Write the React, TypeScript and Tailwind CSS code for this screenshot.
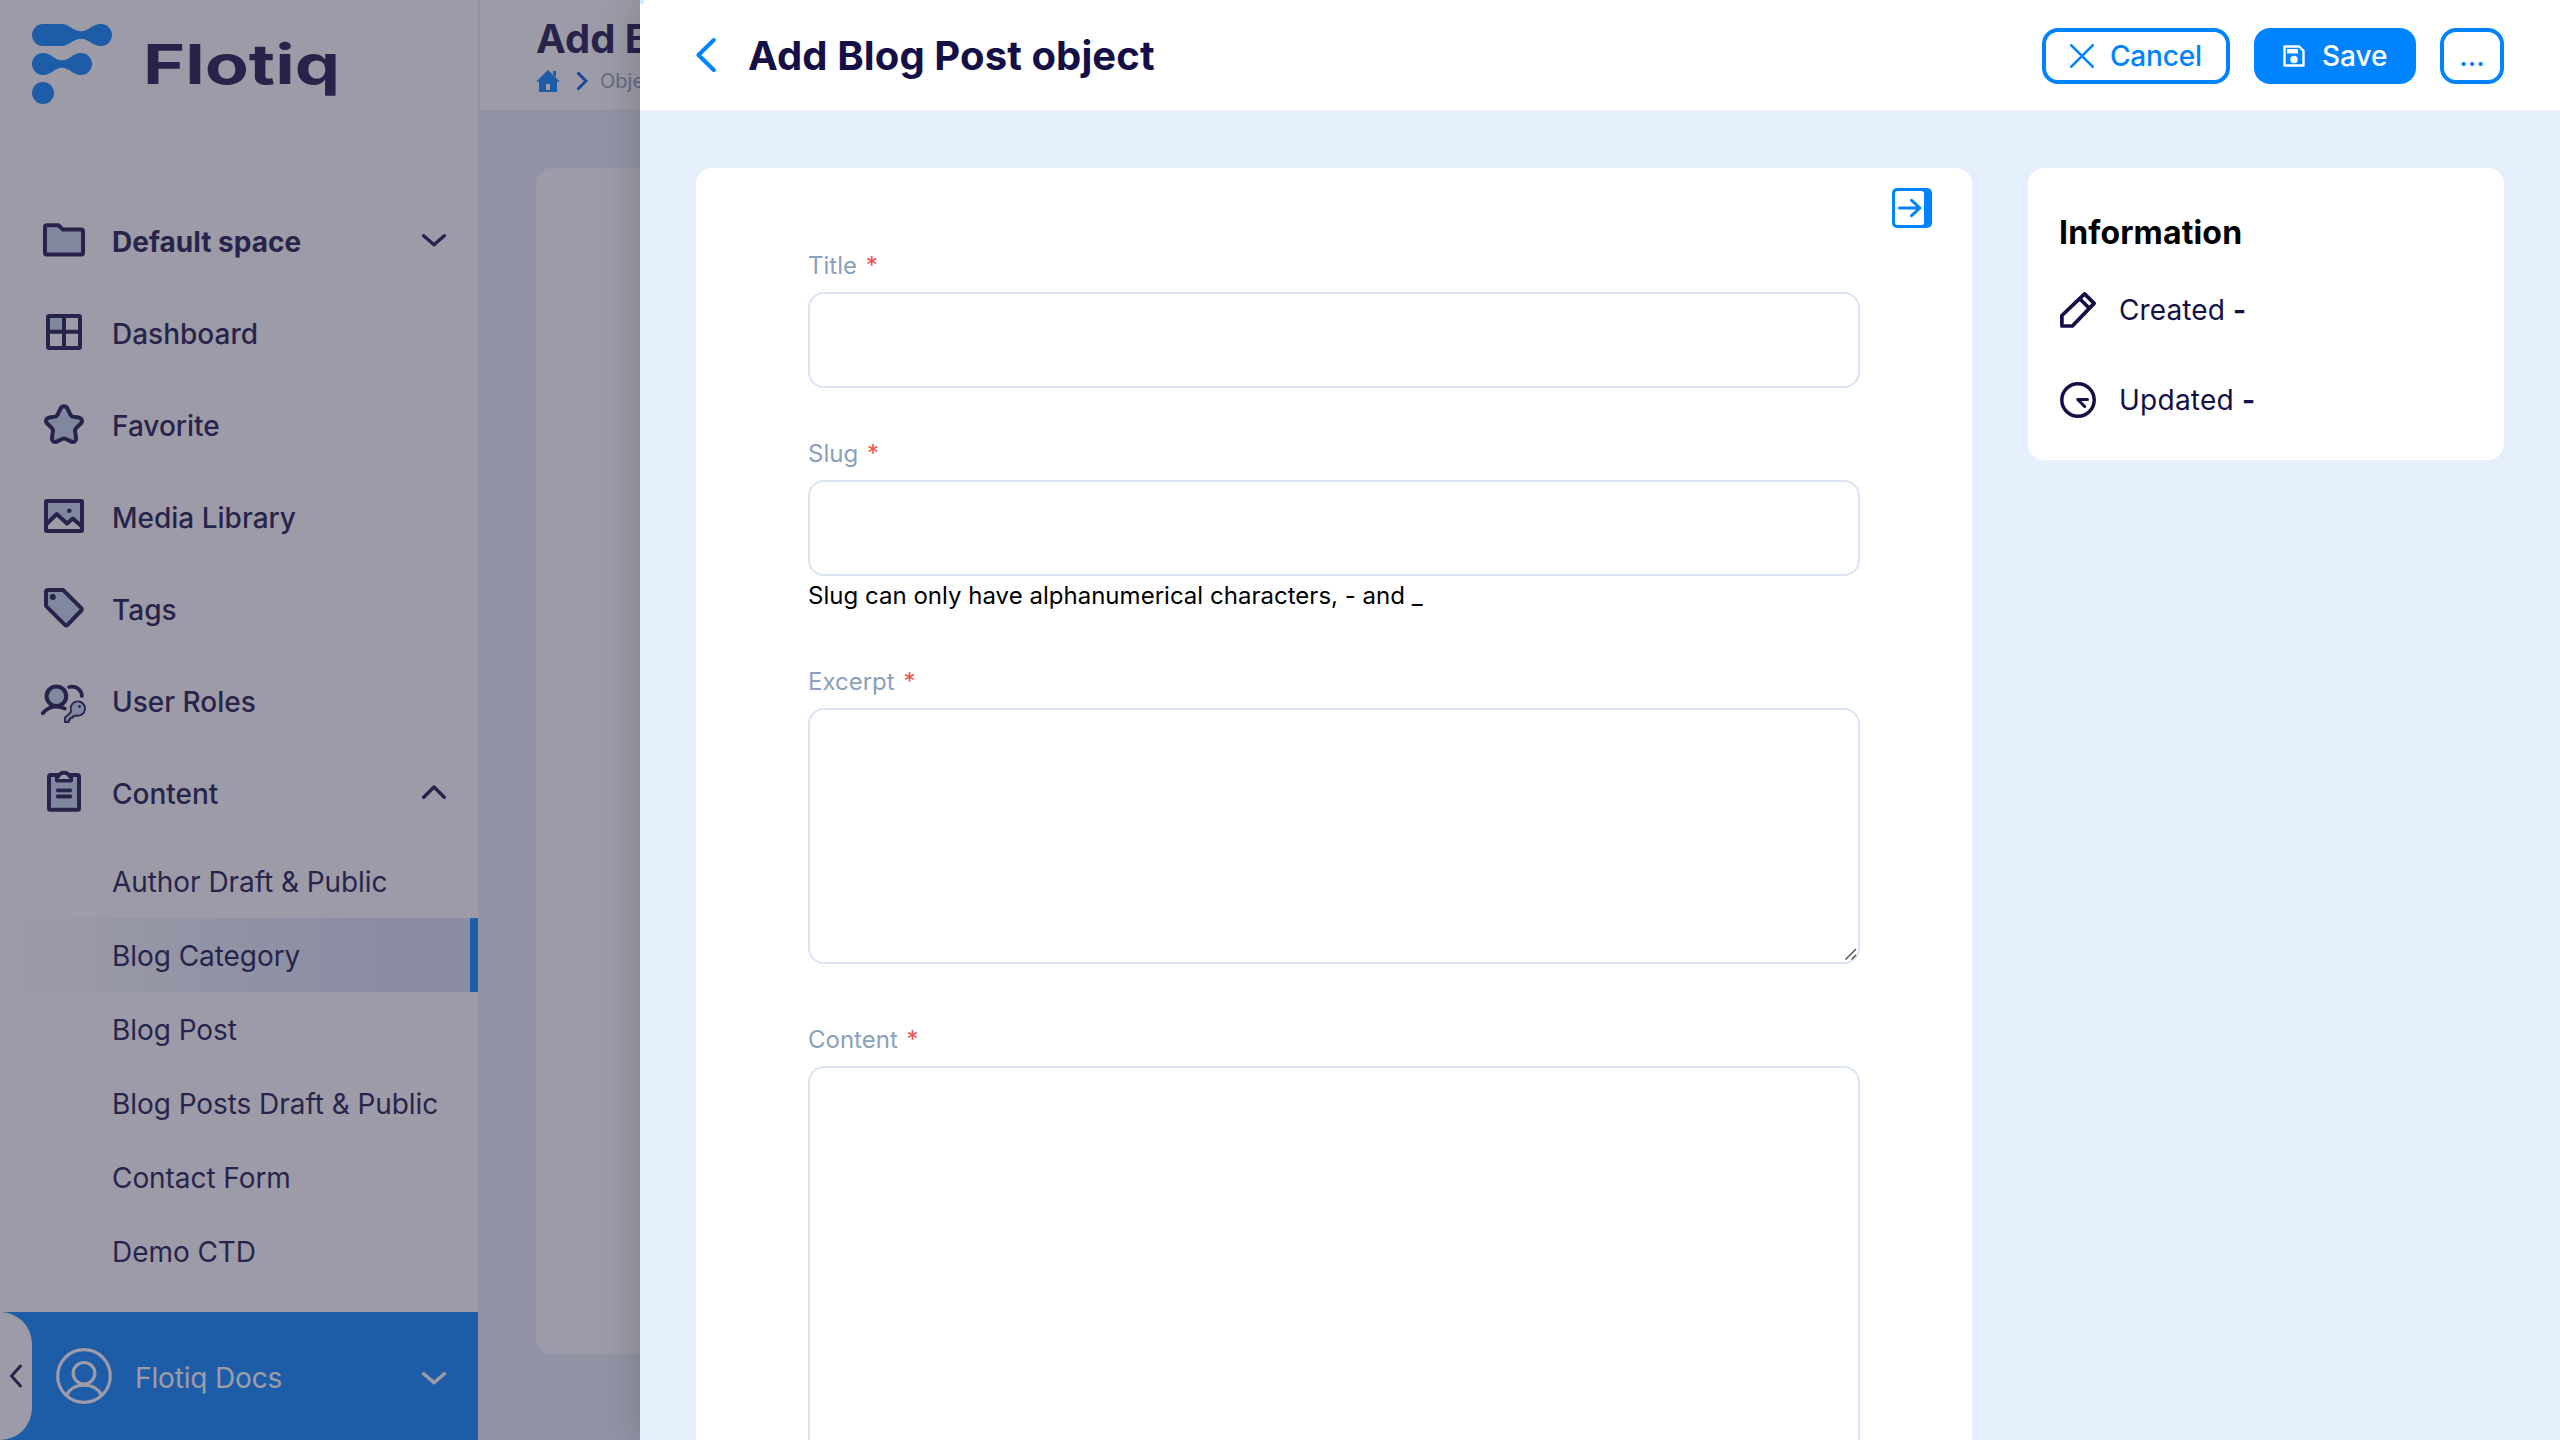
import type { ReactNode } from "react";

const NAVY = "#140f46";
const SOFT = "#cbd7f0";

function NavSvg({ children }: { children: ReactNode }) {
  return (
    <svg
      className="h-12 w-12 shrink-0"
      viewBox="0 0 48 48"
      fill="none"
      stroke={NAVY}
      strokeWidth="4"
      strokeLinecap="round"
      strokeLinejoin="round"
    >
      {children}
    </svg>
  );
}

const FolderIcon = () => (
  <NavSvg>
    <path fill={SOFT} d="M7 9.3h11.5l4.5 4.3h18a2 2 0 0 1 2 2v21a2 2 0 0 1-2 2H7a2 2 0 0 1-2-2V11.3a2 2 0 0 1 2-2z" />
  </NavSvg>
);

const DashboardIcon = () => (
  <NavSvg>
    <path fill={SOFT} stroke="none" d="M8 8h16v16H8z" />
    <rect x="8" y="8" width="32" height="32" rx="1" />
    <path d="M24 8v32M8 23.7h32" />
  </NavSvg>
);

const StarIcon = () => (
  <NavSvg>
    <path
      fill={SOFT}
      d="M24 6.2c1.5 0 2.7.8 3.4 2.2l2.9 6.2c.5 1.1 1.4 1.8 2.6 2l5.6.9c3.4.6 4.6 3.6 2.3 6l-4.7 4.6c-.8.8-1.2 1.9-1 3.1l.9 6.4c.5 3.4-2.3 5.2-5.2 3.8l-4.9-2.4c-1.2-.6-2.6-.6-3.8 0l-4.9 2.4c-2.9 1.4-5.7-.4-5.2-3.8l.9-6.4c.2-1.2-.2-2.3-1-3.1l-4.7-4.6c-2.3-2.4-1.1-5.4 2.3-6l5.6-.9c1.2-.2 2.1-.9 2.6-2l2.9-6.2c.7-1.4 1.9-2.2 3.4-2.2z"
    />
  </NavSvg>
);

const MediaIcon = () => (
  <NavSvg>
    <path fill={SOFT} stroke="none" d="M6 9h36v25l-9.3-8.4-5.7 5.7-10.3-10L6 32z" />
    <rect x="6" y="9" width="36" height="30" rx="1" />
    <path strokeLinecap="butt" d="M6.5 32.2 16.7 22 27 31.5l5.8-5 9 8" />
    <circle cx="29.3" cy="18.7" r="2.3" fill={NAVY} stroke="none" />
  </NavSvg>
);

const TagIcon = () => (
  <NavSvg>
    <path
      fill={SOFT}
      d="M8 6h14.3c.5 0 1 .2 1.4.6l17.6 17.6a1.6 1.6 0 0 1 0 2.3L27.5 40.9a1.8 1.8 0 0 1-2.5 0L6.6 22.7A2 2 0 0 1 6 21.3V8a2 2 0 0 1 2-2z"
    />
    <circle cx="12.8" cy="13" r="3" fill={NAVY} stroke="none" />
  </NavSvg>
);

const RolesIcon = () => (
  <NavSvg>
    <circle cx="16.4" cy="20.2" r="9.8" fill={SOFT} />
    <path d="M2.8 37.2C6 33.2 10.5 30.6 16.4 30.6c3.2 0 6 .7 8.4 2" strokeWidth="3.8" />
    <path d="M29.2 11c6.8-1.6 12.2 2.8 12.7 9" strokeWidth="3.8" />
    <path
      fill={SOFT}
      strokeWidth="1.9"
      d="M30.9 34.600a7.200 7.200 0 1 1 4.900 4.900l-2.300.4-.6 1.600-2.600.5-.4 1.900-1.200.3v1.800h-3.800v-4.400l6-5.500z"
    />
    <circle cx="39.4" cy="30.6" r="1.4" fill={NAVY} stroke="none" />
  </NavSvg>
);

const ContentIcon = () => (
  <NavSvg>
    <rect x="9" y="7" width="30" height="34.7" rx="1.5" fill={SOFT} />
    <path fill="#fff" strokeWidth="3.6" d="M16.8 12.8h14.4V9.6c0-.8-.6-1.2-1.6-1.3C28.6 6 26.6 4.6 24 4.6S19.4 6 18.4 8.3c-1 .1-1.6.5-1.6 1.3z" />
    <path d="M17.7 22.3h12.6M17.7 28.5h12.6" strokeWidth="3.8" />
  </NavSvg>
);

function Chevron({ up = false, color = NAVY }: { up?: boolean; color?: string }) {
  return (
    <svg className="h-6 w-6" viewBox="0 0 24 24" fill="none" stroke={color} strokeWidth="3.4" strokeLinecap="round" strokeLinejoin="round">
      <path d={up ? "M1.7 17.3 12 7l10.3 10.3" : "M1.7 7.7 12 16.8l10.3-9.1"} />
    </svg>
  );
}

function Logo() {
  return (
    <svg className="h-[96px] w-[360px]" viewBox="0 14 360 96">
      <g fill="#0083ff">
        <path d="M43 24h18.5C69 24 73 31.2 81 31.2S92 24 101 24a11 11 0 0 1 0 22c-9 0-12-7.2-20-7.2S69 46 61.5 46H43a11 11 0 0 1 0-22z" />
        <path d="M43 53c8.5 0 11.5 7.3 19 7.3S72.5 53 81 53a11 11 0 0 1 0 22c-8.5 0-11.5-7.3-19-7.3S51.5 75 43 75a11 11 0 0 1 0-22z" />
        <circle cx="43" cy="93" r="11" />
      </g>
      <text
        x="143"
        y="83.7"
        fill={NAVY}
        fontFamily="Inter, sans-serif"
        fontWeight="700"
        fontSize="55"
        textLength="197"
        lengthAdjust="spacingAndGlyphs"
      >
        Flotiq
      </text>
    </svg>
  );
}

const nav = [
  { label: "Default space", icon: <FolderIcon />, bold: true, chevron: "down" },
  { label: "Dashboard", icon: <DashboardIcon /> },
  { label: "Favorite", icon: <StarIcon /> },
  { label: "Media Library", icon: <MediaIcon /> },
  { label: "Tags", icon: <TagIcon /> },
  { label: "User Roles", icon: <RolesIcon /> },
  { label: "Content", icon: <ContentIcon />, chevron: "up" },
];

const types = [
  "Author Draft & Public",
  "Blog Category",
  "Blog Post",
  "Blog Posts Draft & Public",
  "Contact Form",
  "Demo CTD",
];

function Sidebar() {
  return (
    <aside className="flex h-full w-[480px] shrink-0 flex-col border-r-2 border-[#ebecf5] bg-white text-[28px] leading-9 text-[#140f46]">
      <div className="h-[194px] pt-[14px]">
        <Logo />
      </div>
      <nav>
        {nav.map((item) => (
          <div key={item.label} className="flex h-[92px] items-center pr-8 pl-10">
            {item.icon}
            <span className={item.bold ? "ml-6 flex-1 pt-1 font-bold" : "ml-6 flex-1 pt-1 font-medium"}>{item.label}</span>
            {item.chevron && <Chevron up={item.chevron === "up"} />}
          </div>
        ))}
      </nav>
      <ul className="mt-1.5 tracking-[-0.06px]">
        {types.map((t) => (
          <li
            key={t}
            className={
              t === "Blog Category"
                ? "flex h-[74px] items-center border-r-8 border-[#0083ff] bg-linear-to-r from-white to-[#d8e1f5] to-85% pt-px pl-28"
                : "flex h-[74px] items-center pt-px pl-28"
            }
          >
            {t}
          </li>
        ))}
      </ul>
      <div className="mt-auto flex h-32 items-center bg-[#0083ff] pr-8 text-white">
        <div className="flex h-32 w-8 items-center justify-center rounded-r-[32px] bg-white">
          <svg className="h-6 w-4" viewBox="0 0 16 24" fill="none" stroke={NAVY} strokeWidth="3" strokeLinecap="round" strokeLinejoin="round">
            <path d="M12.5 2 3.5 12l9 10" />
          </svg>
        </div>
        <svg className="ml-6 h-14 w-14" viewBox="0 0 56 56" fill="none" stroke="#fff" strokeWidth="3.2">
          <circle cx="28" cy="28" r="26.3" />
          <circle cx="28" cy="25.3" r="10.8" />
          <path d="M10.8 47c2.8-6 9.2-9.8 17.2-9.8S42.4 41 45.2 47" />
        </svg>
        <span className="ml-[23px] flex-1 pt-1 tracking-[-0.15px]">Flotiq Docs</span>
        <div className="pt-1">
          <Chevron color="#fff" />
        </div>
      </div>
    </aside>
  );
}

function Backdrop() {
  return (
    <div className="relative flex w-[640px] shrink-0 overflow-hidden">
      <Sidebar />
      <div className="flex w-[1600px] shrink-0 flex-col bg-[#ebf1fb]">
        <header className="h-28 shrink-0 border-b-2 border-[#ebecf5] bg-white pt-[15px] pl-14">
          <h2 className="text-[40px] leading-[48px] font-bold text-[#140f46]">Add B</h2>
          <div className="mt-1.5 flex items-center text-[20px] leading-6 text-[#8ca0bb]">
            <svg className="h-6 w-6" viewBox="0 0 24 24" fill="#0083ff">
              <path fillRule="evenodd" d="M12 1 24 12.8h-3V23H3V12.8H0L12 1zm-2 14v6h4v-6z" />
              <path d="M17 2h3v6l-3-2.5z" />
            </svg>
            <svg className="ml-4 h-6 w-3" viewBox="0 0 12 24" fill="none" stroke="#0057d9" strokeWidth="3">
              <path d="M1.5 3.5 10 12l-8.5 8.5" />
            </svg>
            <span className="ml-3">Obje</span>
          </div>
        </header>
        <div className="mt-14 ml-14 h-[1186px] rounded-2xl bg-white" />
      </div>
      <div className="absolute inset-0 bg-[#39374f]/50" />
    </div>
  );
}

function Label({ children }: { children: ReactNode }) {
  return (
    <label className="mb-2.5 block pt-px text-[24px] leading-8 text-[#8ca0bb]">
      {children} <span className="ml-0.5 text-[#f04f4f]">*</span>
    </label>
  );
}

function Form() {
  return (
    <section className="relative h-[1400px] w-[1276px] rounded-2xl bg-white px-28 pt-[81px]">
      <svg className="absolute top-5 right-10 h-10 w-10" viewBox="0 0 40 40" fill="none">
        <rect width="40" height="40" rx="5" fill="#0083ff" />
        <rect x="3" y="3" width="29" height="34" rx="2.5" fill="#fff" />
        <path d="M7.5 20H28M19.5 12.3 28 20l-8.5 7.7" stroke="#0083ff" strokeWidth="3" strokeLinecap="round" strokeLinejoin="round" />
      </svg>
      <Label>Title</Label>
      <div className="mb-[49px] h-24 rounded-2xl border-2 border-[#dae4f2]" />
      <Label>Slug</Label>
      <div className="h-24 rounded-2xl border-2 border-[#dae4f2]" />
      <p className="mt-1 mb-[53px] text-[24px] leading-8 tracking-[0.02px] text-black">Slug can only have alphanumerical characters, - and _</p>
      <Label>Excerpt</Label>
      <div className="relative mb-[59px] h-64 rounded-2xl border-2 border-[#dae4f2]">
        <svg className="absolute right-px bottom-0.5 h-3 w-3" viewBox="0 0 12 12" fill="none" stroke="#555" strokeWidth="1.5">
          <path d="M.5 11.5 11 1M6.5 11.5 11 7" />
        </svg>
      </div>
      <Label>Content</Label>
      <div className="h-[480px] rounded-2xl border-2 border-[#dae4f2]" />
    </section>
  );
}

function Information() {
  return (
    <section className="h-[292px] w-[476px] rounded-2xl bg-white px-8 pt-[45px] text-[28px] leading-9 text-[#140f46]">
      <h3 className="mb-[39px] text-[32px] leading-10 font-bold tracking-[0.15px] text-black">
        <span className="-ml-px">Information</span>
      </h3>
      <div className="mb-[54px] flex items-center">
        <svg className="mr-[23px] h-9 w-9" viewBox="0 0 36 36" fill="none" stroke={NAVY} strokeWidth="3.7" strokeLinejoin="round">
          <path d="M1.9 23.5 24.6 1.9l9.5 9.5L12.4 34H1.9zM20 7l9.3 9.3" />
        </svg>
        <span className="tracking-[0.1px]">
          Created <b>-</b>
        </span>
      </div>
      <div className="flex items-center">
        <svg className="mr-[23px] h-9 w-9" viewBox="0 0 36 36" fill="none" stroke={NAVY} strokeWidth="3.5" strokeLinecap="round" strokeLinejoin="round">
          <circle cx="18" cy="18" r="16.2" />
          <path d="M27.5 17.5h-9.800l7 7" strokeWidth="3" />
        </svg>
        <span className="tracking-[0.25px]">
          Updated <b>-</b>
        </span>
      </div>
    </section>
  );
}

function Drawer() {
  return (
    <main className="relative flex w-[1920px] shrink-0 flex-col bg-[#e6f0fd] shadow-[0_0_40px_rgba(0,0,0,0.2)]">
      <div className="absolute top-0 left-0 h-1 w-1 bg-[#cfecfc]" />
      <header className="flex h-28 shrink-0 items-center border-b-2 border-[#ebecf5] bg-white px-14 text-[28px] leading-9 font-medium">
        <svg className="h-9 w-5" viewBox="0 0 20 36" fill="none" stroke="#0083ff" strokeWidth="4" strokeLinecap="round" strokeLinejoin="round">
          <path d="M17.8 3 2.5 18l15.3 15" />
        </svg>
        <h1 className="ml-8 flex-1 pt-0.5 text-[40px] leading-[48px] font-bold tracking-[0.1px] text-[#140f46]">Add Blog Post object</h1>
        <div className="mt-0.5 flex gap-6">
          <button className="flex h-14 w-[188px] items-center rounded-2xl border-4 border-[#0083ff] pl-6 tracking-[-0.2px] text-[#0083ff]">
            <svg className="mr-4 h-6 w-6" viewBox="0 0 24 24" fill="none" stroke="#0083ff" strokeWidth="2.6" strokeLinecap="round">
              <path d="m1.300 1.300 21.400 21.400M22.700 1.300 1.300 22.700" />
            </svg>
            Cancel
          </button>
          <button className="flex h-14 w-[162px] items-center rounded-2xl bg-[#0083ff] pl-7 text-white">
            <svg className="mr-4 h-6 w-6" viewBox="0 0 24 24" fill="none" stroke="#fff" strokeLinejoin="round">
              <path d="M2.5 2.5h14.7l4.3 4.3v14.7h-19z" strokeWidth="2.4" />
              <path d="M5 5h11v4.500H5z" fill="#fff" stroke="none" />
              <circle cx="12" cy="15.5" r="3.7" fill="#fff" stroke="none" />
            </svg>
            Save
          </button>
          <button className="flex h-14 w-16 items-center justify-center rounded-2xl border-4 border-[#0083ff] text-[#0083ff]">...</button>
        </div>
      </header>
      <div className="flex items-start justify-between px-14 pt-14">
        <Form />
        <Information />
      </div>
    </main>
  );
}

export default function App() {
  return (
    <div className="flex h-[1440px] w-[2560px] overflow-hidden bg-[#e6f0fd] font-['Inter',sans-serif]">
      <Backdrop />
      <Drawer />
    </div>
  );
}
